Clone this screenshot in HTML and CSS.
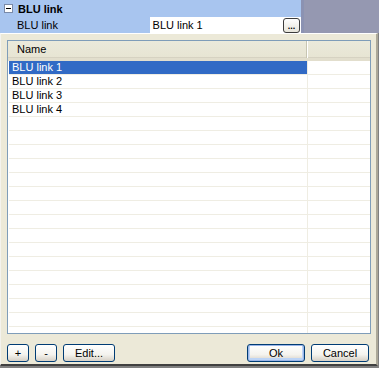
FILE: index.html
```html
<!DOCTYPE html>
<html lang="en">
<head>
    <meta charset="UTF-8">
    <title>BLU link</title>
    <link rel="stylesheet" href="styles.css">
</head>
<body>
    <div class="pgrid">
        <div class="pgrid-main">
            <div class="pg-cat">
                <span class="pg-toggle"></span>
                <span>BLU link</span>
            </div>
            <div class="pg-row">
                <div class="pg-label">BLU link</div>
                <div class="pg-value">
                    <span>BLU link 1</span>
                    <button class="pg-dots">...</button>
                </div>
            </div>
        </div>
        <div class="pgrid-side"></div>
    </div>

    <div class="dialog">
        <div class="listview">
            <div class="lv-head">
                <div class="lv-col">Name</div>
                <div class="lv-col lv-rest"></div>
            </div>
            <div class="lv-body">
                <div class="lv-row selected"><div class="lv-cell">BLU link 1</div><div class="lv-cell"></div></div>
                <div class="lv-row"><div class="lv-cell">BLU link 2</div><div class="lv-cell"></div></div>
                <div class="lv-row"><div class="lv-cell">BLU link 3</div><div class="lv-cell"></div></div>
                <div class="lv-row"><div class="lv-cell">BLU link 4</div><div class="lv-cell"></div></div>
                <div class="lv-fill"></div>
            </div>
        </div>
        <div class="buttons">
            <button class="btn btn-sq">+</button>
            <button class="btn btn-sq">-</button>
            <button class="btn btn-edit">Edit...</button>
            <div class="spacer"></div>
            <button class="btn btn-ok">Ok</button>
            <button class="btn btn-cancel">Cancel</button>
        </div>
    </div>
</body>
</html>
```

FILE: styles.css
```css
body{
    margin: 0;
    width: 379px;
    height: 368px;
    overflow: hidden;
    background-color: #808080;
    font-family: "Liberation Sans", Arial, sans-serif;
    font-size: 11px;
    color: #000;
}

/* property grid behind the dialog */
.pgrid{
    display: flex;
    height: 33px;
}
.pgrid-main{
    width: 301px;
    background-color: #a8c5ef;
    border-right: 3px solid #8b92b2;
}
.pgrid-side{
    flex: 1;
    background-color: #9598b1;
}
.pg-cat{
    height: 17px;
    display: flex;
    align-items: center;
    padding-left: 4px;
    font-weight: bold;
}
.pg-toggle{
    width: 7px;
    height: 7px;
    border: 1px solid #7a8aa8;
    background: #fff;
    margin-right: 5px;
    position: relative;
}
.pg-toggle::after{
    content: "";
    position: absolute;
    left: 1px;
    top: 3px;
    width: 5px;
    height: 1px;
    background: #000;
}
.pg-row{
    height: 16px;
    display: flex;
}
.pg-label{
    width: 134px;
    padding-left: 17px;
    line-height: 16px;
}
.pg-value{
    width: 150px;
    background: #fff;
    display: flex;
    align-items: center;
    padding-left: 3px;
}
.pg-value span{
    flex: 1;
}
.pg-dots{
    width: 17px;
    height: 15px;
    margin-right: 1px;
    padding: 0;
    font: bold 9px "Liberation Sans", Arial, sans-serif;
    line-height: 15px;
    border: 1px solid #3c3c3c;
    border-radius: 3px;
    background: linear-gradient(#fff, #e6e4da);
}

/* dialog */
.dialog{
    box-sizing: border-box;
    width: 378px;
    height: 333px;
    background-color: #ece9d8;
    border-top: 1px solid #fff;
    border-left: 1px solid #f4f3ee;
    border-right: 2px solid #aca899;
    border-bottom: 2px solid #404040;
    padding: 6px 6px 0 6px;
}
.listview{
    box-sizing: border-box;
    width: 364px;
    height: 294px;
    border: 1px solid #7f9db9;
    background: #fff;
    display: flex;
    flex-direction: column;
}
.lv-head{
    display: flex;
    height: 20px;
    box-sizing: border-box;
    background: linear-gradient(#ebeadb, #e7e4d3);
    border-bottom: 3px solid #e2decd;
    box-shadow: inset 0 -1px 0 #d6d2c2;
}
.lv-col{
    box-sizing: border-box;
    width: 299px;
    padding-left: 9px;
    line-height: 17px;
    border-right: 1px solid #c7c5b2;
}
.lv-rest{
    flex: 1;
    border-right: none;
    border-left: 1px solid #fff;
}
.lv-body{
    flex: 1;
    display: flex;
    flex-direction: column;
    padding-left: 1px;
}
.lv-row{
    display: flex;
    height: 14px;
    box-sizing: border-box;
    border-bottom: 1px solid #efede3;
}
.lv-cell{
    box-sizing: border-box;
    width: 298px;
    padding-left: 3px;
    line-height: 13px;
}
.lv-cell + .lv-cell{
    flex: 1;
    border-left: 1px solid #efede3;
}
.lv-row.selected .lv-cell:first-child{
    background: #316ac5;
    color: #fff;
}
.lv-fill{
    flex: 1;
    background-image:
        linear-gradient(90deg, transparent 298px, #efede3 298px, #efede3 299px, transparent 299px),
        repeating-linear-gradient(transparent 0, transparent 13px, #efede3 13px, #efede3 14px);
}

/* buttons */
.buttons{
    display: flex;
    margin-top: 10px;
    gap: 6px;
    padding-right: 1px;
}
.spacer{
    flex: 1;
}
.btn{
    box-sizing: border-box;
    height: 18px;
    padding: 0;
    font: 11px "Liberation Sans", Arial, sans-serif;
    color: #000;
    border: 1px solid #003c74;
    border-radius: 3px;
    background: linear-gradient(#fff 0%, #f4f3ee 60%, #d6d0c5 100%);
}
.btn-sq{
    width: 22px;
}
.btn-edit{
    width: 52px;
}
.btn-ok{
    width: 58px;
    box-shadow: inset 0 0 0 1px #99b4e8, inset 0 -1px 0 2px #bcd4f6;
}
.btn-cancel{
    width: 58px;
}
```
